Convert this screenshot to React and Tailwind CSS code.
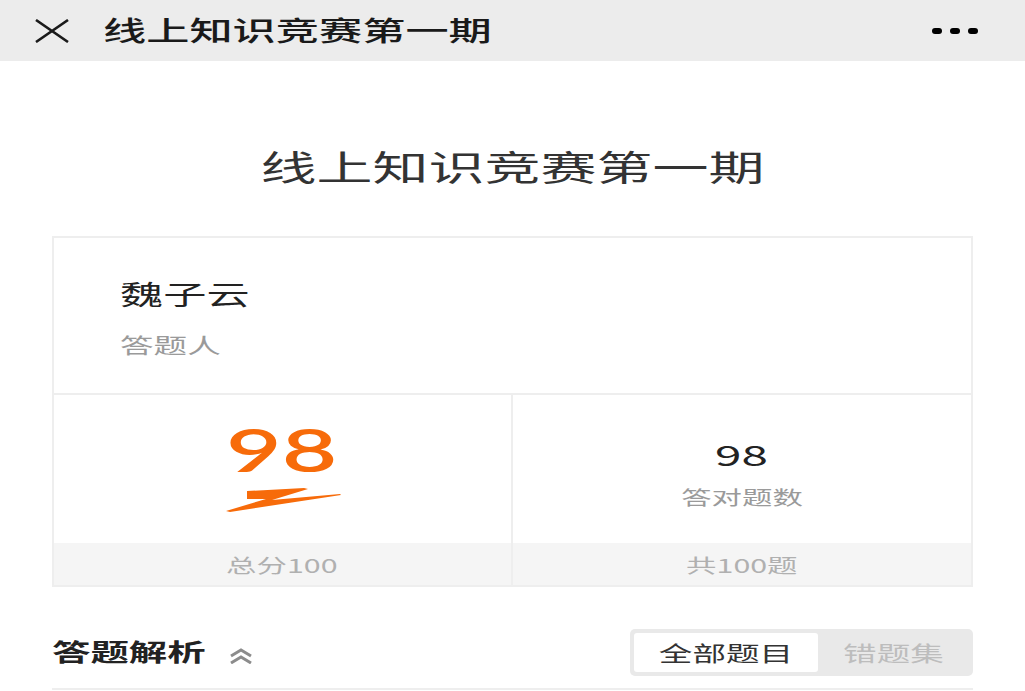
import React from "react";

function S({ className = "", origin = "origin-left", children }) {
  return (
    <span className={`inline-block scale-x-[1.6] whitespace-nowrap ${origin} ${className}`}>
      {children}
    </span>
  );
}

export default function App() {
  return (
    <div className="w-[1025px] h-[691px] overflow-hidden bg-white font-['Noto_Sans_CJK_SC','Noto_Sans',sans-serif]">
      {/* header */}
      <header className="h-[61px] bg-[#ececec] flex items-center pl-[34px] pr-[47px]">
        <svg width="36" height="24" viewBox="0 0 36 24" className="shrink-0">
          <path d="M2 1 L34 23 M34 1 L2 23" stroke="#1a1a1a" strokeWidth="2.6" fill="none" />
        </svg>
        <div className="ml-[33px] w-[300px]">
          <S className="text-[27px] leading-[27px] text-[#1a1a1a] font-medium">线上知识竞赛第一期</S>
        </div>
        <div className="ml-auto flex gap-[8px] items-center">
          <span className="w-[10px] h-[6px] rounded-full bg-black" />
          <span className="w-[10px] h-[6px] rounded-full bg-black" />
          <span className="w-[10px] h-[6px] rounded-full bg-black" />
        </div>
      </header>

      {/* main title */}
      <div className="pt-[87px] flex justify-center">
        <S origin="origin-center" className="text-[35px] leading-[35px] text-[#333333]">线上知识竞赛第一期</S>
      </div>

      {/* card */}
      <div className="mx-[52px] mt-[53px] border-2 border-[#eeeeee]">
        <div className="h-[157px] pl-[66px] pt-[42px] border-b-2 border-[#eeeeee]">
          <div>
            <S className="text-[27px] leading-[27px] text-[#222222]">魏子云</S>
          </div>
          <div className="mt-[24px]">
            <S className="text-[21px] leading-[21px] text-[#9a9a9a]">答题人</S>
          </div>
        </div>
        <div className="grid grid-cols-2">
          <div className="border-r-2 border-[#eeeeee]">
            <div className="h-[148px] flex flex-col items-center pt-[24px]">
              <S origin="origin-center" className="text-[60px] leading-[60px] text-[#f76b0a] font-['Lato',sans-serif] font-semibold scale-x-[1.5]">98</S>
              <svg width="120" height="30" viewBox="0 0 120 30" className="mt-[6px]">
                <path
                  d="M25 6 L82 3 L86 4 L50 15 L118 9 L119 10 L8 27 L4 26 L44 14 L25 14 Z"
                  fill="#f76b0a"
                />
              </svg>
            </div>
            <div className="h-[42px] bg-[#f5f5f5] flex items-center justify-center">
              <S origin="origin-center" className="text-[19px] leading-[19px] text-[#b0b0b0]">总分100</S>
            </div>
          </div>
          <div>
            <div className="h-[148px] flex flex-col items-center pt-[45px]">
              <S origin="origin-center" className="text-[28px] leading-[28px] text-[#222222] scale-x-[1.7]">98</S>
              <div className="mt-[18px]">
                <S origin="origin-center" className="text-[19px] leading-[19px] text-[#9a9a9a]">答对题数</S>
              </div>
            </div>
            <div className="h-[42px] bg-[#f5f5f5] flex items-center justify-center">
              <S origin="origin-center" className="text-[19px] leading-[19px] text-[#b0b0b0]">共100题</S>
            </div>
          </div>
        </div>
      </div>

      {/* analysis row */}
      <div className="mx-[52px] mt-[42px] flex items-center justify-between">
        <div className="flex items-center">
          <div className="w-[153px]">
            <S className="text-[24px] leading-[24px] font-bold text-[#222222]">答题解析</S>
          </div>
          <svg width="26" height="16" viewBox="0 0 26 16" className="ml-[23px] mt-[6px]">
            <path d="M3 8 L13 2 L23 8 M3 15 L13 9 L23 15" stroke="#8c8c8c" strokeWidth="3" fill="none" />
          </svg>
        </div>
        <div className="w-[343px] h-[47px] bg-[#e9e9e9] rounded-[5px] p-[4px] flex">
          <div className="w-[184px] bg-white rounded-[3px] flex items-center justify-center">
            <S origin="origin-center" className="text-[21px] leading-[21px] text-[#333333]">全部题目</S>
          </div>
          <div className="flex-1 flex items-center justify-center">
            <S origin="origin-center" className="text-[21px] leading-[21px] text-[#bdbdbd]">错题集</S>
          </div>
        </div>
      </div>
      <div className="mx-[52px] mt-[12px] h-[2px] bg-[#eeeeee]" />
    </div>
  );
}
